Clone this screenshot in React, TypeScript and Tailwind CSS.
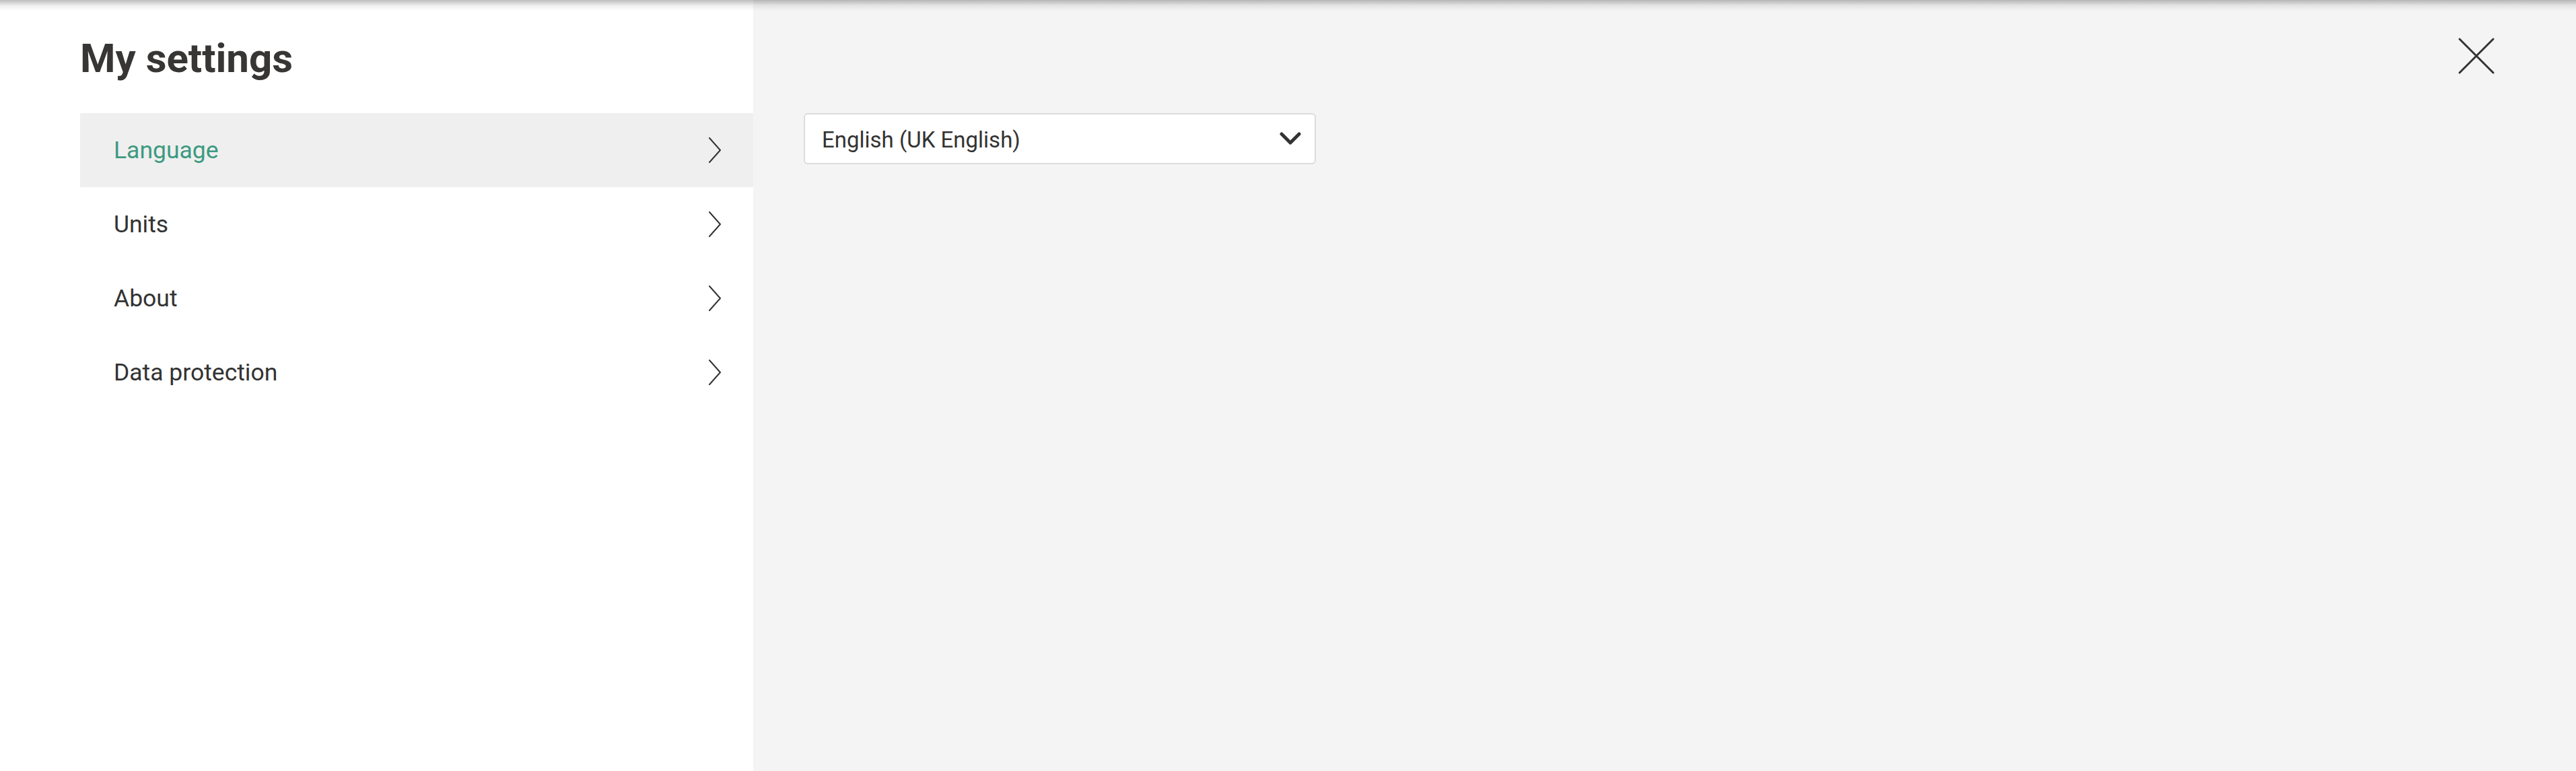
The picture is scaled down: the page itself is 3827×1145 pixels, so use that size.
import React from "react";

const items = ["Language", "Units", "About", "Data protection"];

function Chevron() {
  return (
    <svg width="20" height="38" viewBox="0 0 20 38" fill="none" className="shrink-0">
      <path d="M2 1 L18 19 L2 37" stroke="#333333" strokeWidth="2" strokeLinecap="round" strokeLinejoin="round" />
    </svg>
  );
}

export default function App() {
  return (
    <div
      className="relative flex h-[1145px] w-full overflow-hidden"
      style={{ fontFamily: "Roboto, 'Noto Sans', sans-serif" }}
    >
      <div className="flex w-[1119px] shrink-0 flex-col bg-white pl-[119px] pt-[57px]">
        <h1 className="text-[60px] font-bold leading-[60px] text-[#373634]">My settings</h1>
        <ul className="mt-[51px] flex flex-col">
          {items.map((it, i) => (
            <li
              key={it}
              className={`flex h-[110px] items-center justify-between pl-[50px] pr-[47px] ${
                i === 0 ? "bg-[#efefef]" : ""
              }`}
            >
              <span
                className={`text-[35.5px] leading-[36px] ${i === 0 ? "text-[#3d9a80]" : "text-[#333333]"}`}
              >
                {it}
              </span>
              <Chevron />
            </li>
          ))}
        </ul>
      </div>
      <div className="flex-1 bg-[#f4f4f4] pl-[75px] pt-[168px]">
        <div className="flex h-[76px] w-[761px] items-center justify-between rounded-[6px] border-2 border-[#dcdcdc] bg-white pl-[25px] pr-[20px]">
          <span className="pt-[3px] text-[33px] leading-[33px] text-[#333333]">English (UK English)</span>
          <svg width="32" height="20" viewBox="0 0 32 20" fill="none">
            <path d="M3 3 L16 16 L29 3" stroke="#333333" strokeWidth="5" strokeLinecap="round" strokeLinejoin="round" />
          </svg>
        </div>
      </div>
      <div className="pointer-events-none absolute left-0 right-0 top-0 h-[16px] bg-gradient-to-b from-[rgba(0,0,0,0.26)] via-[rgba(0,0,0,0.07)] to-transparent" />
      <button className="absolute right-[120px] top-[55px] flex h-[56px] w-[56px] items-center justify-center">
        <svg width="56" height="56" viewBox="0 0 56 56" fill="none">
          <path d="M3 3 L53 53 M53 3 L3 53" stroke="#333333" strokeWidth="3" strokeLinecap="round" />
        </svg>
      </button>
    </div>
  );
}
